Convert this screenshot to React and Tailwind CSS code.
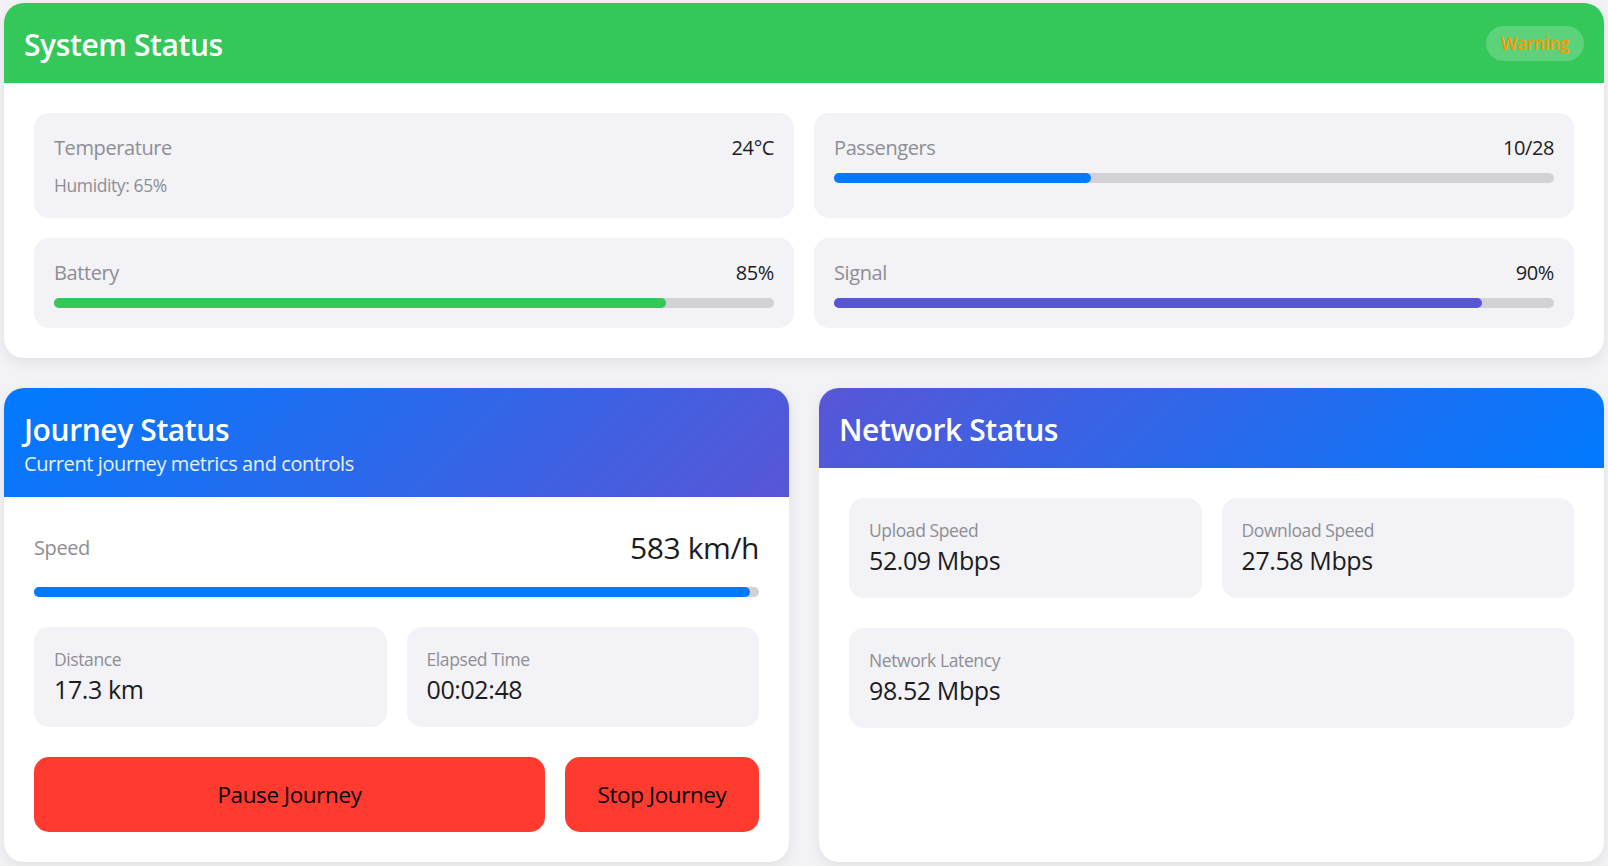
import React from 'react';

// iOS-like palette used across the dashboard
const font = "font-['Open_Sans','Noto_Sans',sans-serif] tracking-[-0.025em]";

function Bar({ value, color }) {
  return (
    <div className="h-[10px] w-full rounded-full bg-[#D1D1D6]">
      <div className={`h-full rounded-full ${color}`} style={{ width: `${value}%` }} />
    </div>
  );
}

function StatTile({ label, value, children }) {
  return (
    <div className="rounded-[15px] bg-[#F2F2F7] p-5">
      <div className="flex items-center justify-between">
        <span className="text-[20px] leading-[30px] text-[#8E8E93]">{label}</span>
        <span className="text-[20px] leading-[30px] text-[#1C1C1E]">{value}</span>
      </div>
      <div className="mt-[10px]">{children}</div>
    </div>
  );
}

function Metric({ label, value }) {
  return (
    <div className="rounded-[15px] bg-[#F2F2F7] px-5 py-5">
      <div className="text-[17.5px] leading-[25px] text-[#8E8E93]">{label}</div>
      <div className="text-[25px] leading-[35px] text-[#1C1C1E]">{value}</div>
    </div>
  );
}

export default function App() {
  const passengers = 10;
  const capacity = 28;

  return (
    <div className={`min-h-screen bg-[#F2F2F7] px-[4px] pt-[3px] ${font}`}>
      {/* System status */}
      <section className="overflow-hidden rounded-[20px] bg-white shadow-[0_4px_14px_rgba(0,0,0,0.08)]">
        <header className="flex h-[80px] items-center justify-between bg-[#34C759] px-5">
          <h2 className="mt-[4px] text-[30px] font-semibold leading-[40px] text-white">System Status</h2>
          <span className="rounded-full bg-white/20 px-[15px] py-[5px] text-[17.5px] font-semibold leading-[25px] text-[#FF9500]">
            Warning
          </span>
        </header>
        <div className="grid grid-cols-2 gap-5 p-[30px]">
          <StatTile label="Temperature" value="24°C">
            <p className="text-[17.5px] leading-[25px] text-[#8E8E93]">Humidity: 65%</p>
          </StatTile>
          <StatTile label="Passengers" value={`${passengers}/${capacity}`}>
            <Bar value={(passengers / capacity) * 100} color="bg-[#007AFF]" />
          </StatTile>
          <StatTile label="Battery" value="85%">
            <Bar value={85} color="bg-[#34C759]" />
          </StatTile>
          <StatTile label="Signal" value="90%">
            <Bar value={90} color="bg-[#5856D6]" />
          </StatTile>
        </div>
      </section>

      <div className="mt-[30px] grid grid-cols-2 gap-[30px]">
        {/* Journey status */}
        <section className="overflow-hidden rounded-[20px] bg-white shadow-[0_4px_14px_rgba(0,0,0,0.08)]">
          <header className="h-[109px] bg-[linear-gradient(135deg,#007AFF,#5856D6)] px-5 pt-[21px]">
            <h2 className="text-[30px] font-semibold leading-[42px] text-white">Journey Status</h2>
            <p className="text-[20px] leading-[26px] text-white/90">Current journey metrics and controls</p>
          </header>
          <div className="p-[30px]">
            <div className="flex items-center justify-between">
              <span className="text-[20px] leading-[42px] text-[#8E8E93]">Speed</span>
              <span className="text-[30px] leading-[42px] text-[#1C1C1E]">583 km/h</span>
            </div>
            <div className="mt-[18px]">
              <Bar value={98.8} color="bg-[#007AFF]" />
            </div>
            <div className="mt-[30px] grid grid-cols-2 gap-5">
              <Metric label="Distance" value="17.3 km" />
              <Metric label="Elapsed Time" value="00:02:48" />
            </div>
            <div className="mt-[30px] flex gap-5">
              <button className="h-[75px] flex-1 rounded-[15px] bg-[#FF3B30] text-[22.5px] font-medium text-black">
                Pause Journey
              </button>
              <button className="h-[75px] w-[194px] rounded-[15px] bg-[#FF3B30] text-[22.5px] font-medium text-black">
                Stop Journey
              </button>
            </div>
          </div>
        </section>

        {/* Network status */}
        <section className="overflow-hidden rounded-[20px] bg-white shadow-[0_4px_14px_rgba(0,0,0,0.08)]">
          <header className="flex h-[80px] items-center bg-[linear-gradient(135deg,#5856D6,#007AFF)] px-5">
            <h2 className="mt-[4px] text-[30px] font-semibold leading-[40px] text-white">Network Status</h2>
          </header>
          <div className="p-[30px]">
            <div className="grid grid-cols-2 gap-5">
              <Metric label="Upload Speed" value="52.09 Mbps" />
              <Metric label="Download Speed" value="27.58 Mbps" />
            </div>
            <div className="mt-[30px]">
              <Metric label="Network Latency" value="98.52 Mbps" />
            </div>
          </div>
        </section>
      </div>
    </div>
  );
}
